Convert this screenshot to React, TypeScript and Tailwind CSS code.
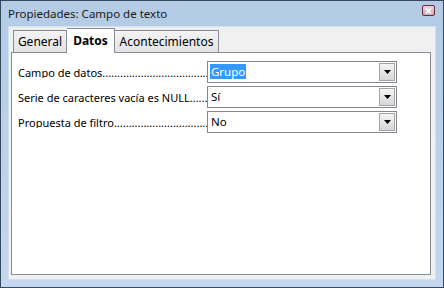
import React from "react";

const font = { fontFamily: '"Noto Sans", "Open Sans", sans-serif' };

const fields = [
  { label: "Campo de datos", value: "Grupo", selected: true },
  { label: "Serie de caracteres vacía es NULL", value: "Sí", selected: false },
  { label: "Propuesta de filtro", value: "No", selected: false },
];

function Combo({ value, selected }: { value: string; selected: boolean }) {
  return (
    <div className="flex h-[22px] w-[190px] items-center border border-[#828790] bg-white pl-[2px] pr-[1px]">
      <div className="flex-1 text-[11.5px]">
        <span
          className={
            selected
              ? "bg-[#3399ff] px-[1px] text-white"
              : "px-[1px] text-black"
          }
        >
          {value}
        </span>
      </div>
      <div className="flex h-[18px] w-[16px] items-center justify-center border border-[#a4a4a4] bg-gradient-to-b from-[#f6f6f6] to-[#d6d6d6]">
        <svg width="7" height="4" viewBox="0 0 7 4">
          <path d="M0 0h7L3.5 4z" fill="#000" />
        </svg>
      </div>
    </div>
  );
}

export default function App() {
  return (
    <div
      className="flex h-[288px] w-[444px] flex-col border border-[#34495c] bg-gradient-to-b from-[#b3cbe5] to-[#c3d8ee] text-[12px] leading-none text-black"
      style={font}
    >
      {/* title bar */}
      <div className="flex h-[25px] shrink-0 items-center justify-between pl-[7px] pr-[8px]">
        <span className="text-[11.5px] text-[#1a1a1a]">Propiedades: Campo de texto</span>
        <div className="mt-[-6px] flex h-[11px] w-[13px] items-center justify-center rounded-[2px] border border-[#6b2b3a] bg-gradient-to-b from-[#e8d8dc] to-[#c9a9b1]">
          <svg width="7" height="6" viewBox="0 0 7 6">
            <path d="M1 0.5l5 5M6 0.5l-5 5" stroke="#fff" strokeWidth="1.6" />
          </svg>
        </div>
      </div>

      {/* client area */}
      <div className="mx-[7px] mb-[7px] flex flex-1 flex-col border border-[#d5e0ec] bg-[#f0f0f0] pb-[4px] pl-[2px] pr-[4px] pt-[1px]">
        {/* tabs */}
        <div className="flex h-[24px] shrink-0 items-end pl-[2px]">
          <div className="flex h-[22px] w-[54px] items-center justify-center border border-b-0 border-[#898c95] bg-gradient-to-b from-[#f3f3f3] to-[#e4e4e4]">
            General
          </div>
          <div className="relative z-10 -mb-px flex h-[25px] w-[48px] items-center justify-center border border-b-0 border-l-0 border-[#898c95] bg-white font-bold">
            Datos
          </div>
          <div className="flex h-[22px] w-[104px] items-center justify-center border border-b-0 border-l-0 border-[#898c95] bg-gradient-to-b from-[#f3f3f3] to-[#e4e4e4]">
            Acontecimientos
          </div>
        </div>

        {/* panel */}
        <div className="flex flex-1 flex-col gap-[3px] border border-[#898c95] bg-white pl-[6px] pt-[8px]">
          {fields.map((f) => (
            <div key={f.label} className="flex items-center">
              <div className="w-[189px] overflow-hidden whitespace-nowrap text-[11px]">
                {f.label}
                {"..................................................................."}
              </div>
              <Combo value={f.value} selected={f.selected} />
            </div>
          ))}
        </div>
      </div>
    </div>
  );
}
